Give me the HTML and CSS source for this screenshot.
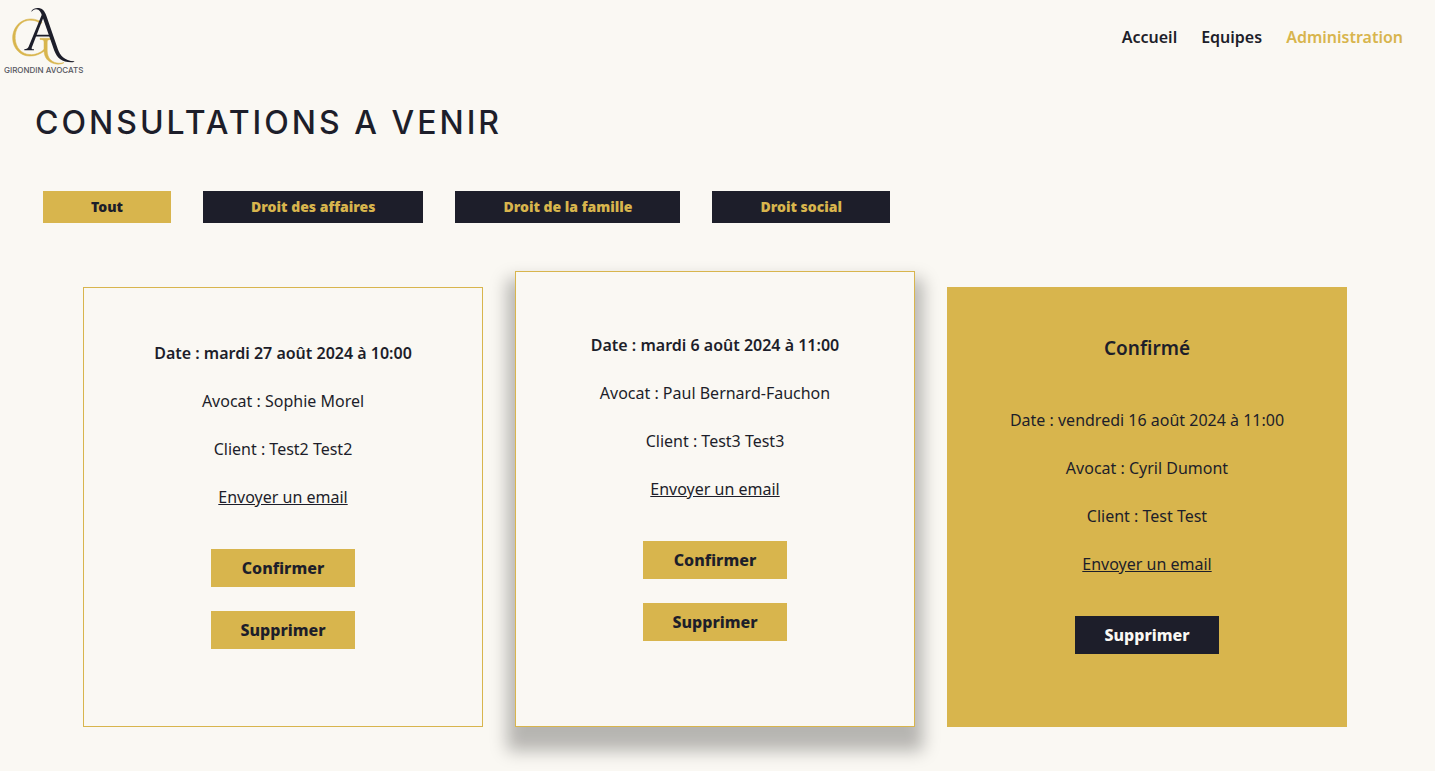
FILE: index.html
```html
<!DOCTYPE html>
<html lang="fr">
<head>
<meta charset="utf-8">
<meta name="viewport" content="width=device-width, initial-scale=1">
<title>Girondin Avocats - Administration</title>
<link rel="stylesheet" href="styles.css">
</head>
<body>
<header class="header">
  <a class="logo" href="#" aria-label="Girondin Avocats">
    <svg class="logo-image" viewBox="0 0 90 80" aria-hidden="true">
      <path class="logo-gold" d="M42 22.500C37.500 19.300 31.500 18 26 19.600C17.500 22 12.500 30 12.600 38.500C12.900 48 20 56 29.500 56.100C35.500 56.200 41 54 44.800 50.500L44 49.500C40 53 35 55 30 54.600C21.500 54.200 15.600 47.500 15.200 38.500C14.800 29.500 19.500 22 27.500 20.500C32 19.700 37 20.700 41 23.800Z"/>
      <path class="logo-gold" d="M40 38.300H51V39.400C48.200 39.500 47.200 40 47.200 42V51C47.400 57 50.500 62 57 63C59.500 63.400 61.700 63.200 64 62.600C61.500 64.300 57.500 64.600 54 63.600C48 62 44.300 57.500 44 51V42C44 40 43 39.500 40 39.400Z"/>
      <path class="logo-navy" d="M31.200 11.200C33 8.500 36 7.600 39 8C43.500 8.800 45.300 12.500 46.800 17L57.800 49C60 55.300 64 60.800 74.500 61.300C74 62.100 72.800 62.300 71.500 62.200C61.500 62.200 57.500 58.500 54.200 50.500L42.200 16C40.800 12 39.500 9.300 36.200 9.200C34.200 9.100 32.800 10 31.800 11.600Z"/>
      <path class="logo-navy" d="M42.500 13L44 16L31.800 47.500C31.300 49 31.900 49.200 34 49.300V50.300H24.300V49.300C26.800 49.200 27.800 48.700 28.700 46.600Z"/>
      <path class="logo-navy" d="M35 34.800H52V36.600H34.500Z"/>
      <text class="logo-name" x="4" y="73">GIRONDIN AVOCATS</text>
    </svg>
  </a>
  <nav class="nav">
    <a class="nav-link" href="#">Accueil</a>
    <a class="nav-link" href="#">Equipes</a>
    <a class="nav-link nav-link-active" href="#">Administration</a>
  </nav>
</header>
<main class="main">
  <h1 class="title">CONSULTATIONS A VENIR</h1>
  <div class="filters">
    <button class="filter filter-active" type="button">Tout</button>
    <button class="filter" type="button">Droit des affaires</button>
    <button class="filter" type="button">Droit de la famille</button>
    <button class="filter" type="button">Droit social</button>
  </div>
  <section class="cards">
    <article class="card">
      <div class="details">
        <p class="line line-strong">Date : mardi 27 août 2024 à 10:00</p>
        <p class="line">Avocat : Sophie Morel</p>
        <p class="line">Client : Test2 Test2</p>
        <a class="email" href="#">Envoyer un email</a>
      </div>
      <div class="actions">
        <button class="action" type="button">Confirmer</button>
        <button class="action" type="button">Supprimer</button>
      </div>
    </article>
    <article class="card card-raised">
      <div class="details">
        <p class="line line-strong">Date : mardi 6 août 2024 à 11:00</p>
        <p class="line">Avocat : Paul Bernard-Fauchon</p>
        <p class="line">Client : Test3 Test3</p>
        <a class="email" href="#">Envoyer un email</a>
      </div>
      <div class="actions">
        <button class="action" type="button">Confirmer</button>
        <button class="action" type="button">Supprimer</button>
      </div>
    </article>
    <article class="card card-confirmed">
      <h2 class="status">Confirmé</h2>
      <div class="details">
        <p class="line">Date : vendredi 16 août 2024 à 11:00</p>
        <p class="line">Avocat : Cyril Dumont</p>
        <p class="line">Client : Test Test</p>
        <a class="email" href="#">Envoyer un email</a>
      </div>
      <div class="actions">
        <button class="action action-dark" type="button">Supprimer</button>
      </div>
    </article>
  </section>
</main>
</body>
</html>
```

FILE: styles.css
```css
:root {
  --cream: #faf8f3;
  --navy: #1d1e2a;
  --gold: #d8b54d;
}

* {
  box-sizing: border-box;
}

body {
  margin: 0;
  background: var(--cream);
  color: var(--navy);
  font-family: "Noto Sans", sans-serif;
  font-size: 16px;
  line-height: 24px;
}

.header {
  display: flex;
  justify-content: space-between;
  align-items: flex-start;
}

.logo,
.logo-image {
  display: block;
  width: 90px;
  height: 80px;
}

.logo-gold {
  fill: var(--gold);
  stroke: var(--gold);
  stroke-width: 0.5;
}

.logo-navy {
  fill: var(--navy);
}

.logo-name {
  fill: #55565e;
  font-family: Inter, sans-serif;
  font-size: 8px;
  font-weight: 500;
}

.nav {
  display: flex;
  gap: 24px;
  padding: 25px 32px;
}

.nav-link {
  color: var(--navy);
  font-weight: 600;
  text-decoration: none;
}

.nav-link-active {
  color: var(--gold);
}

.main {
  padding: 23px 48px 44px 35px;
}

.title {
  margin: 0 0 48px;
  font-family: Inter, sans-serif;
  font-size: 32px;
  font-weight: 500;
  line-height: 40px;
  letter-spacing: 3px;
}

.filters {
  display: flex;
  flex-wrap: wrap;
  gap: 32px;
  padding-left: 8px;
}

.filter {
  padding: 4px 48px;
  border: 0;
  background: var(--navy);
  color: var(--gold);
  font: 900 14px/24px "Noto Sans", sans-serif;
}

.filter-active {
  background: var(--gold);
  color: var(--navy);
}

.cards {
  display: grid;
  grid-template-columns: repeat(3, 1fr);
  align-items: end;
  gap: 32px;
  padding: 48px 40px 0 48px;
}

.card {
  display: flex;
  flex-direction: column;
  align-items: center;
  justify-content: center;
  min-height: 440px;
  padding: 24px 24px 48px;
  border: 1px solid var(--gold);
  background: var(--cream);
  text-align: center;
}

.card-raised {
  min-height: 456px;
  box-shadow: 0 16px 16px 8px rgba(0, 0, 0, 0.27);
}

.card-confirmed {
  background: var(--gold);
}

.status {
  margin: 0 0 48px;
  font-size: 19px;
  font-weight: 600;
  line-height: 24px;
}

.details {
  display: flex;
  flex-direction: column;
  align-items: center;
  gap: 24px;
}

.line {
  margin: 0;
}

.line-strong {
  font-weight: 600;
}

.email {
  color: var(--navy);
}

.actions {
  display: flex;
  flex-direction: column;
  gap: 24px;
  margin-top: 40px;
}

.action {
  min-width: 144px;
  padding: 7px 24px;
  border: 0;
  background: var(--gold);
  color: var(--navy);
  font: 800 16px/24px "Noto Sans", sans-serif;
}

.action-dark {
  background: var(--navy);
  color: var(--cream);
}
```
